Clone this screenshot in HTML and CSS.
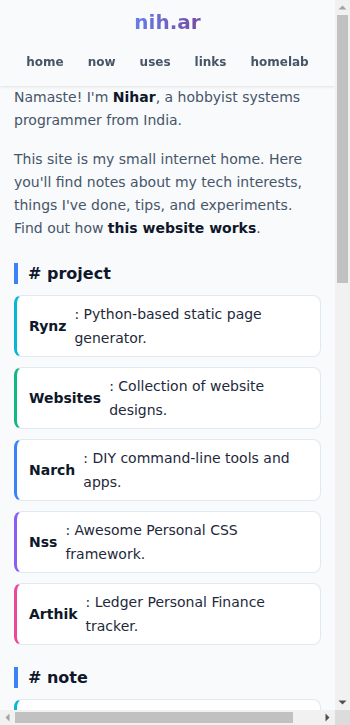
FILE: index.html
```html
<!DOCTYPE html>
<html lang="en">
<head>
    <meta charset="UTF-8">
    <meta name="viewport" content="width=device-width, initial-scale=1.0">
    <title>nih.ar</title>
    <link rel="stylesheet" href="styles.css">
</head>
<body>
<div class="frame">
    <div class="page">
        <header class="site-header">
            <a class="logo" href="#">nih.ar</a>
            <nav class="nav">
                <a href="#">home</a>
                <a href="#">now</a>
                <a href="#">uses</a>
                <a href="#">links</a>
                <a href="#">homelab</a>
            </nav>
        </header>

        <main class="content">
            <p>Namaste! I'm <strong>Nihar</strong>, a hobbyist systems programmer from India.</p>
            <p>This site is my small internet home. Here you'll find notes about my tech interests, things I've done, tips, and experiments. Find out how <a class="strong-link" href="#">this website works</a>.</p>

            <h2 class="section-title"># project</h2>
            <div class="card-list">
                <a class="card cyan" href="#"><strong class="card-name">Rynz</strong><span class="card-desc">: Python-based static page generator.</span></a>
                <a class="card green" href="#"><strong class="card-name">Websites</strong><span class="card-desc">: Collection of website designs.</span></a>
                <a class="card blue" href="#"><strong class="card-name">Narch</strong><span class="card-desc">: DIY command-line tools and apps.</span></a>
                <a class="card violet" href="#"><strong class="card-name">Nss</strong><span class="card-desc">: Awesome Personal CSS framework.</span></a>
                <a class="card pink" href="#"><strong class="card-name">Arthik</strong><span class="card-desc">: Ledger Personal Finance tracker.</span></a>
            </div>

            <h2 class="section-title"># note</h2>
            <div class="card-list">
                <a class="card cyan" href="#"><strong class="card-name">Linux</strong><span class="card-desc">: Notes on my daily driver desktop setup.</span></a>
                <a class="card green" href="#"><strong class="card-name">Neovim</strong><span class="card-desc">: Plugins, keymaps and config tips.</span></a>
                <a class="card blue" href="#"><strong class="card-name">Git</strong><span class="card-desc">: Commands I keep looking up again and again.</span></a>
                <a class="card violet" href="#"><strong class="card-name">Shell</strong><span class="card-desc">: Small scripts for my everyday tasks.</span></a>
                <a class="card pink" href="#"><strong class="card-name">Homelab</strong><span class="card-desc">: Self-hosting on old hardware.</span></a>
                <a class="card cyan" href="#"><strong class="card-name">Rust</strong><span class="card-desc">: Learning log and small experiments.</span></a>
            </div>

            <h2 class="section-title"># elsewhere</h2>
            <div class="card-list">
                <a class="card green" href="#"><strong class="card-name">GitHub</strong><span class="card-desc">: Source code for most of my projects.</span></a>
                <a class="card blue" href="#"><strong class="card-name">Mastodon</strong><span class="card-desc">: Short posts and random thoughts.</span></a>
                <a class="card violet" href="#"><strong class="card-name">Email</strong><span class="card-desc">: Say hello, I read every single mail.</span></a>
                <a class="card pink" href="#"><strong class="card-name">RSS</strong><span class="card-desc">: Follow new notes as soon as they land.</span></a>
            </div>
        </main>

        <footer class="site-footer">
            <p class="footer-line">© 2024 Nihar · Built with Rynz</p>
        </footer>
    </div>

    <!-- scrollbars as seen in the window -->
    <div class="vbar">
        <svg class="arrow" width="15" height="15" viewBox="0 0 15 15"><path d="M3.5 9.5h8l-4-4z" fill="#a3a3a3"/></svg>
        <div class="vthumb"></div>
        <div class="rest"></div>
        <svg class="arrow" width="15" height="15" viewBox="0 0 15 15"><path d="M3.5 5.5h8l-4 4z" fill="#505050"/></svg>
    </div>
    <div class="hbar">
        <svg class="arrow" width="15" height="15" viewBox="0 0 15 15"><path d="M9.5 3.5v8l-4-4z" fill="#a3a3a3"/></svg>
        <div class="hthumb"></div>
        <div class="rest"></div>
        <svg class="arrow" width="15" height="15" viewBox="0 0 15 15"><path d="M5.5 3.5v8l4-4z" fill="#505050"/></svg>
    </div>
    <div class="corner"></div>
</div>
</body>
</html>
```

FILE: styles.css
```css
body {
    font-family: 'DejaVu Sans', sans-serif;
    background: #f8fafc;
    color: #475569;
    margin: 0;
    padding: 0;
}

a {
    color: inherit;
    text-decoration: none;
}

.frame {
    display: grid;
    grid-template-columns: 1fr 15px;
    grid-template-rows: 1fr 15px;
    height: 100vh;
}

/* the page scrolls inside its own box */
.page {
    overflow: auto;
    scrollbar-width: none;
    min-width: 0;
}

.vbar,
.hbar {
    display: flex;
    background: #f1f1f1;
}

.vbar {
    flex-direction: column;
}

.arrow {
    flex: none;
    display: block;
}

.vthumb {
    flex: none;
    height: 268px;
    margin: 0 2px;
    background: #c1c1c1;
}

.hthumb {
    flex: none;
    width: 278px;
    margin: 2px 0;
    background: #c1c1c1;
}

.rest {
    flex: 1;
}

.corner {
    background: #dcdcdc;
}

.site-header {
    position: sticky;
    top: 0;
    z-index: 10;
    background: #f8fafc;
    box-shadow: 0 1px 3px rgba(0, 0, 0, 0.1);
    padding: 8px 0 4px;
    text-align: center;
}

.logo {
    display: inline-block;
    font-size: 20px;
    line-height: 28px;
    font-weight: bold;
    background: linear-gradient(90deg, #667eea, #764ba2);
    -webkit-background-clip: text;
    background-clip: text;
    color: transparent;
}

.nav {
    display: flex;
    justify-content: center;
    gap: 24px;
    padding: 14px 0 8px;
}

.nav a {
    font-size: 12px;
    line-height: 24px;
    font-weight: bold;
    color: #475569;
}

.content {
    padding: 0 14px 20px;
}

.content p {
    font-size: 14px;
    line-height: 1.65;
    margin: 0 0 16px;
}

.content strong,
.strong-link {
    font-weight: bold;
    color: #0f172a;
}

.section-title {
    font-size: 16px;
    line-height: 21px;
    color: #0f172a;
    border-left: 4px solid #3b82f6;
    padding-left: 10px;
    margin: 22px 0 11px;
}

.card-list {
    display: flex;
    flex-direction: column;
    gap: 10px;
}

.card {
    display: flex;
    align-items: center;
    background: #fff;
    border: 1px solid #e2e8f0;
    border-left: 3px solid #06b6d4;
    border-radius: 8px;
    padding: 6px 12px;
    color: #0f172a;
}

.card.green { border-left-color: #10b981; }
.card.blue { border-left-color: #3b82f6; }
.card.violet { border-left-color: #8b5cf6; }
.card.pink { border-left-color: #ec4899; }

.card-name {
    font-size: 14px;
    white-space: nowrap;
    margin-right: 8px;
}

.card-desc {
    flex: 1;
    font-size: 14px;
    line-height: 24px;
    color: #1e293b;
}

.site-footer {
    border-top: 1px solid #e2e8f0;
    padding: 24px 14px 48px;
}

.footer-line {
    margin: 0;
    font-size: 13px;
    line-height: 20px;
    color: #64748b;
}
```
